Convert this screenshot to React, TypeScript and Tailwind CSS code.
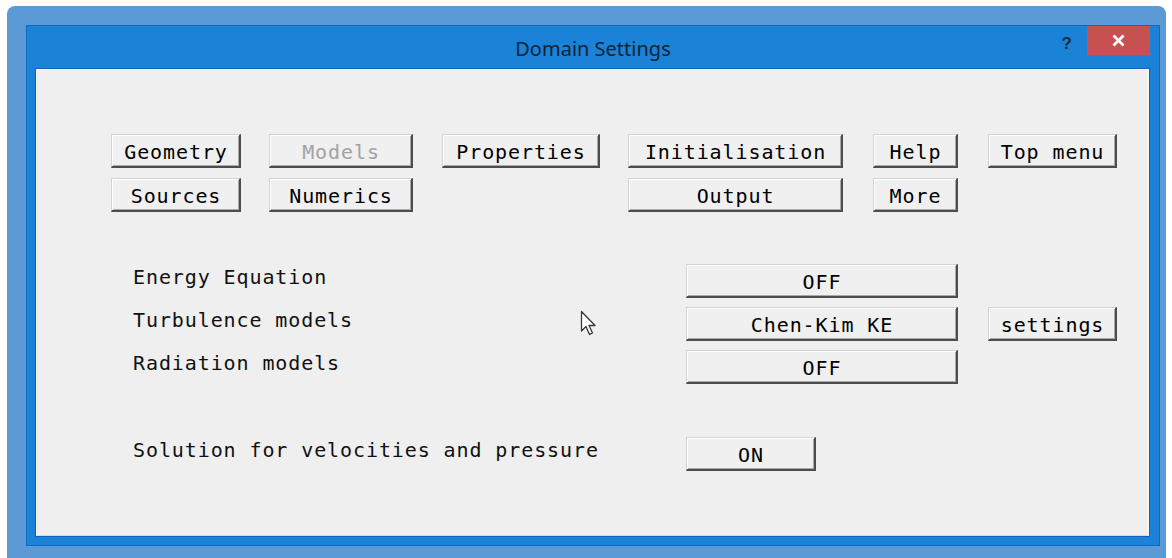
import React from 'react';

type Cell = { label: string; width: string; disabled?: boolean } | null;

const mono = "font-['DejaVu_Sans_Mono',monospace] text-[20px] tracking-[0.9px]";

// top command bar, two rows; null leaves the slot empty
const commandRows: Cell[][] = [
  [
    { label: 'Geometry', width: 'w-[130px]' },
    { label: 'Models', width: 'w-[144px]', disabled: true },
    { label: 'Properties', width: 'w-[158px]' },
    { label: 'Initialisation', width: 'w-[215px]' },
    { label: 'Help', width: 'w-[85px]' },
    { label: 'Top menu', width: 'w-[129px]' },
  ],
  [
    { label: 'Sources', width: 'w-[130px]' },
    { label: 'Numerics', width: 'w-[144px]' },
    null,
    { label: 'Output', width: 'w-[215px]' },
    { label: 'More', width: 'w-[85px]' },
    null,
  ],
];

const modelRows = [
  { label: 'Energy Equation', value: 'OFF' },
  { label: 'Turbulence models', value: 'Chen-Kim KE', extra: 'settings' },
  { label: 'Radiation models', value: 'OFF' },
];

function PanelButton({
  children,
  className = '',
  disabled = false,
}: {
  children: React.ReactNode;
  className?: string;
  disabled?: boolean;
}) {
  return (
    <button
      className={`flex h-[34px] items-center justify-center border border-t-[#d4d4d4] border-l-[#d4d4d4] border-r-2 border-b-2 border-r-[#4d4d4d] border-b-[#4d4d4d] bg-[#f0f0f0] pt-[2px] pl-[1px] shadow-[inset_1px_1px_0_#ffffff,inset_-1px_-1px_0_#a9a9a9] ${mono} ${
        disabled ? 'text-[#a3a3a3]' : 'text-black'
      } ${className}`}
    >
      {children}
    </button>
  );
}

function Pointer() {
  return (
    <svg width="20" height="28" viewBox="0 0 20 28" className="absolute left-[543px] top-[240px]">
      <path
        d="M1.5 1.5 L1.5 21 L6 16.5 L9.5 24.5 L12.5 23 L9 15.5 L15 15.5 Z"
        fill="#ffffff"
        stroke="#3a3a3a"
        strokeWidth="1.3"
        strokeLinejoin="round"
      />
    </svg>
  );
}

export default function App() {
  return (
    <div className="h-[558px] w-[1172px] overflow-hidden bg-white pt-[6px] pr-[6px] pl-[7px]">
      <div className="h-full rounded-t-[8px] bg-[#5b9ad5] pt-[19px] pr-[6px] pb-[12px] pl-[19px]">
        <div className="flex h-full flex-col border border-[#1567bb] bg-[#1a82d7]">
          {/* title bar */}
          <div className="grid h-[43px] shrink-0 grid-cols-[1fr_auto_1fr]">
            <div />
            <div className="flex items-center pt-[2px] font-['Noto_Sans',sans-serif] text-[20px] text-[#142338]">
              Domain Settings
            </div>
            <div className="flex items-start justify-end pr-[9px]">
              <span className="mt-[5px] mr-[15px] font-['Liberation_Sans',sans-serif] text-[17px] font-bold text-[#1b2a3c]">
                ?
              </span>
              <div className="flex h-[29px] w-[63px] items-center justify-center bg-[#c75050]">
                <svg width="13" height="13" viewBox="0 0 13 13">
                  <path d="M1.5 1.5 L11.5 11.5 M11.5 1.5 L1.5 11.5" stroke="#ffffff" strokeWidth="2.8" />
                </svg>
              </div>
            </div>
          </div>

          {/* client area */}
          <div className="relative mr-[10px] mb-[9px] ml-[9px] flex-1 border border-t-[#fbf8ef] border-l-[#fbf8ef] border-r-[#fbf8ef] border-b-[#d9d9d9] bg-[#efefef] pt-[64px] pl-[74px] shadow-[0_0_0_1px_#1262b3]">
            <div className="grid grid-cols-[158px_173px_186px_245px_115px_129px] gap-y-[10px]">
              {commandRows.flat().map((cell, i) =>
                cell ? (
                  <PanelButton key={i} className={cell.width} disabled={cell.disabled}>
                    {cell.label}
                  </PanelButton>
                ) : (
                  <div key={i} />
                ),
              )}
            </div>

            <div className={`mt-[52px] ml-[22px] grid grid-cols-[553px_302px_129px] gap-y-[9px] text-[#111111] ${mono}`}>
              {modelRows.map((row) => (
                <React.Fragment key={row.label}>
                  <div className="pt-[2px] leading-[22px]">{row.label}</div>
                  <PanelButton className="w-[272px]">{row.value}</PanelButton>
                  {row.extra ? <PanelButton className="w-[129px]">{row.extra}</PanelButton> : <div />}
                </React.Fragment>
              ))}
            </div>

            <div className={`mt-[53px] ml-[22px] grid grid-cols-[553px_130px] text-[#111111] ${mono}`}>
              <div className="pt-[2px] leading-[22px]">Solution for velocities and pressure</div>
              <PanelButton className="w-[130px]">ON</PanelButton>
            </div>

            <Pointer />
          </div>
        </div>
      </div>
    </div>
  );
}
